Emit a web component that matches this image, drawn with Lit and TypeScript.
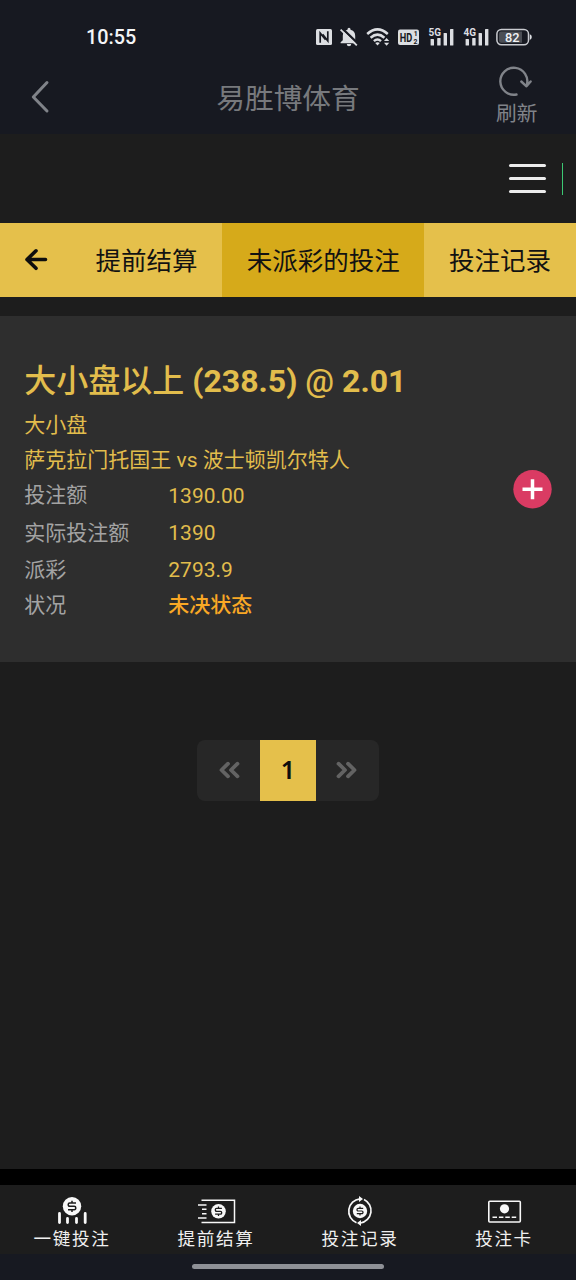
import { LitElement, html, css, svg } from "lit";
import { customElement, property } from "lit/decorators.js";

const dollar = (cx: number, cy: number, k: number) => svg`
  <g transform="translate(${cx} ${cy}) scale(${k})" fill="none" stroke="#1c1c1c" stroke-width="1.5">
    <path d="M4 -3.4H-2.2Q-3.8 -3.4 -3.8 -1.7Q-3.8 0 -2.2 0H2.2Q3.8 0 3.8 1.7Q3.8 3.4 2.2 3.4H-4M0 -5.6V-3.4M0 3.4V5.6" />
  </g>`;

@customElement("status-bar")
class StatusBar extends LitElement {
  static styles = css`
    :host { display: flex; align-items: center; justify-content: space-between; height: 56px; padding: 18px 44px 0 86px; box-sizing: border-box; }
    .time { font: 500 19.8px/38px Roboto, sans-serif; color: #f4f5f7; padding-top: 2px; }
    .icons { display: flex; align-items: center; height: 38px; }
    svg { display: block; fill: #dcdee2; }
    .g8 { margin-left: 8px; }
    .g9 { margin-left: 9px; }
    .g7 { margin-left: 7px; }
    text { font-family: Roboto, sans-serif; font-weight: 700; }
    .level { font-weight: 500; }
  `;
  signal(label: string, cls: string, w: number) {
    return html`<svg class=${cls} width=${w} height="20" viewBox="0 0 ${w} 20">
      <text x="0.5" y="9" font-size="10" textLength="12.5" lengthAdjust="spacingAndGlyphs">${label}</text>
      <rect x="2.6" y="12" width="3.4" height="6.5" rx="0.6" /><rect x="9.2" y="11" width="3.4" height="7.5" rx="0.6" />
      <rect x="15.6" y="6" width="3.4" height="12.5" rx="0.6" /><rect x="22" y="2" width="3.4" height="16.5" rx="0.6" />
    </svg>`;
  }
  render() {
    return html`
      <div class="time">10:55</div>
      <div class="icons">
        <svg width="16" height="20" viewBox="0 0 16 20">
          <rect y="2" width="16" height="16" rx="1.5" />
          <path d="M4.200 15.800V6.200L9.600 12.600M11.800 4.200V13.800L6.600 7.400" fill="none" stroke="#171921" stroke-width="1.700" />
        </svg>
        <svg class="g8" width="18" height="20" viewBox="0 0 18 20">
          <path d="M9 .8a1.500 1.500 0 0 1 1.500 1.500v.5c2.900.7 4.700 2.900 4.700 6v4.400l2.200 2.300v.7H.6v-.9l2.200-2.100V8.800c0-3.100 1.800-5.300 4.700-6v-.5A1.500 1.500 0 0 1 9 .8zM6.800 17h4.400a2.200 2.200 0 0 1-4.400 0z" />
          <path d="M1 .4L18.500 17.200" stroke="#171921" stroke-width="2.400" />
          <path d="M.6 2.600L16.800 18.400" stroke="#dcdee2" stroke-width="1.800" />
        </svg>
        <svg class="g8" width="24" height="20" viewBox="0 0 24 20">
          <g fill="none" stroke="#dcdee2" stroke-width="2.500">
            <path d="M1.200 7Q11.500-2.300 21.800 7M4.600 10.700Q11.500 4.500 18.400 10.700M7.900 14.100Q11.500 11 15 14.100" />
          </g>
          <path d="M9.200 16Q11.500 14.500 13.800 16L11.500 18.600zM18 14l2.600-3 2.600 3zM18 15.700l2.600 3 2.600-3z" />
        </svg>
        <svg class="g8" width="21" height="20" viewBox="0 0 21 20">
          <rect y="2.500" width="21" height="15.500" rx="2" />
          <text x="1.800" y="14.500" font-size="12" textLength="12.500" lengthAdjust="spacingAndGlyphs" fill="#171921">HD</text>
          <text x="15.800" y="9.200" font-size="6.800" fill="#171921">1</text>
          <text x="15.400" y="17.200" font-size="6.800" fill="#171921">2</text>
        </svg>
        ${this.signal("5G", "g9", 27)} ${this.signal("4G", "g8", 26)}
        <svg class="g7" width="36" height="20" viewBox="0 0 36 20">
          <rect x="0.900" y="2.400" width="31.600" height="15.400" rx="4.500" fill="none" stroke="#c9cbd0" stroke-width="1.500" />
          <path d="M3 6.500Q3 4.400 5.200 4.400H26V15.800H5.200Q3 15.800 3 13.700z" fill="#4b4e55" />
          <path d="M33.800 7.300Q35.800 8 35.800 10.100T33.800 12.900z" />
          <text class="level" x="9" y="14.500" font-size="12.800" fill="#f2f3f5">82</text>
        </svg>
      </div>`;
  }
}

@customElement("title-bar")
class TitleBar extends LitElement {
  static styles = css`
    :host { display: grid; grid-template-columns: 120px 1fr 120px; height: 78px; color: #808389; font-family: Roboto, "Noto Sans CJK SC", sans-serif; }
    .back { padding: 24px 0 0 30px; }
    .title { text-align: center; font-size: 28.7px; line-height: 87px; height: 78px; color: #77797d; }
    .refresh { padding: 10px 0 0 40px; }
    .label { font-size: 20.7px; line-height: 24px; margin-top: 3px; }
    svg { display: block; fill: none; stroke: #808389; }
  `;
  render() {
    return html`
      <div class="back"><svg width="20" height="34" viewBox="0 0 20 34" stroke-width="3" stroke-linecap="round" stroke-linejoin="round"><path d="M17 2.500L3.300 17L17 31" /></svg></div>
      <div class="title">易胜博体育</div>
      <div class="refresh">
        <svg width="36" height="33" viewBox="0 0 36 33" stroke-width="2.400" stroke-linecap="round" stroke-linejoin="round">
          <path d="M20.500 28.500A13.500 13.500 0 1 1 30.800 19M25.300 15.500L30.500 20.300L34.600 15.500" />
        </svg>
        <div class="label">刷新</div>
      </div>`;
  }
}

@customElement("menu-row")
class MenuRow extends LitElement {
  static styles = css`
    :host { display: flex; justify-content: flex-end; align-items: center; height: 89px; padding-right: 13px; box-sizing: border-box; gap: 16px; }
    .burger { display: flex; flex-direction: column; gap: 9.700px; width: 37.500px; }
    .line { height: 3.200px; border-radius: 1.500px; background: #ececec; }
    .mark { width: 1px; height: 32px; background: #3cc873; }
  `;
  render() {
    return html`<div class="burger"><div class="line"></div><div class="line"></div><div class="line"></div></div><div class="mark"></div>`;
  }
}

@customElement("tab-strip")
class TabStrip extends LitElement {
  static styles = css`
    :host { display: flex; height: 74px; background: #e5c04b; color: #121212; overflow: hidden; font: 25.500px/77px Roboto, "Noto Sans CJK SC", sans-serif; }
    .back { width: 71px; display: flex; align-items: center; padding-left: 24px; box-sizing: border-box; flex: none; }
    .tab { padding: 0 24.600px; flex: none; white-space: nowrap; }
    .on { background: #d6aa1a; }
  `;
  render() {
    return html`
      <div class="back"><svg width="24" height="24" viewBox="0 0 24 24" fill="none" stroke="#0e0e0e" stroke-width="3.600" stroke-linecap="round" stroke-linejoin="round"><path d="M12 2.800L3 11.500L12 20.300M3.300 11.500H21.500" /></svg></div>
      <div class="tab">提前结算</div><div class="tab on">未派彩的投注</div><div class="tab">投注记录</div>`;
  }
}

@customElement("bet-card")
class BetCard extends LitElement {
  static styles = css`
    :host { display: flex; justify-content: space-between; align-items: center; height: 346px; margin-top: 19px; padding: 0 24px 0 24.300px; box-sizing: border-box; background: #2e2e2e; color: #e2bd4c; font: 21px/35px Roboto, "Noto Sans CJK SC", sans-serif; }
    .info { padding-top: 2px; }
    .title { font-size: 32px; line-height: 46px; font-weight: 500; margin-bottom: 4px; }
    .odds { font-weight: 700; }
    .at { font-weight: 500; }
    .rows { display: grid; grid-template-columns: 144px 1fr; grid-template-rows: 37px 38px 36px 34px; align-items: center; }
    .k { color: #a3a3a3; margin-top: -1px; }
    .state { color: #f9a825; font-weight: 500; }
    svg { display: block; }
  `;
  @property({ attribute: false }) rows = [["投注额", "1390.00"], ["实际投注额", "1390"], ["派彩", "2793.9"]];
  render() {
    return html`
      <div class="info">
        <div class="title">大小盘以上 <span class="odds">(238.5) <span class="at">@</span> 2.01</span></div>
        <div>大小盘</div>
        <div>萨克拉门托国王 vs 波士顿凯尔特人</div>
        <div class="rows">
          ${this.rows.map(([k, v]) => html`<div class="k">${k}</div><div>${v}</div>`)}
          <div class="k">状况</div><div class="state">未决状态</div>
        </div>
      </div>
      <svg width="39" height="39" viewBox="0 0 39 39"><circle cx="19.500" cy="19.200" r="19.200" fill="#da3b63" /><path d="M9.500 19.200H29.500M19.500 9.200V29.200" stroke="#fff" stroke-width="3.500" /></svg>`;
  }
}

@customElement("page-switch")
class PageSwitch extends LitElement {
  static styles = css`
    :host { display: flex; justify-content: center; margin-top: 78px; }
    .box { display: grid; grid-template-columns: 63px 56px 63px; height: 61px; border-radius: 8px; background: #272727; overflow: hidden; }
    .cell { display: flex; align-items: center; justify-content: center; }
    .cur { background: #e5c04b; color: #0e0e0e; font: 600 25px/59px "Noto Sans", Roboto, sans-serif; align-items: flex-start; }
    svg { fill: none; stroke: #636363; stroke-width: 3.800; stroke-linecap: round; stroke-linejoin: round; }
  `;
  render() {
    return html`<div class="box">
      <div class="cell"><svg width="24" height="20" viewBox="0 0 24 20"><path d="M11 2.700L4.500 9L11 15.300M20.500 2.700L14 9L20.500 15.300" /></svg></div>
      <div class="cell cur">1</div>
      <div class="cell"><svg width="24" height="20" viewBox="0 0 24 20"><path d="M2.500 2.700L9 9L2.500 15.300M12 2.700L18.500 9L12 15.300" /></svg></div>
    </div>`;
  }
}

@customElement("bottom-nav")
class BottomNav extends LitElement {
  static styles = css`
    :host { display: block; margin-top: auto; }
    .gap { height: 16px; background: #000; }
    .nav { display: grid; grid-template-columns: repeat(4, 1fr); height: 69px; }
    .item { display: flex; flex-direction: column; align-items: center; padding-top: 10px; color: #f0f0f0; font: 17.600px/25px Roboto, "Noto Sans CJK SC", sans-serif; letter-spacing: 1.600px; }
    .home { display: flex; justify-content: center; height: 26px; padding-top: 10px; box-sizing: border-box; background: #171921; }
    .bar { width: 192px; height: 5px; border-radius: 3px; background: #8e9096; }
    svg { display: block; }
  `;
  render() {
    const w = "#f8f8f8";
    return html`
      <div class="gap"></div>
      <div class="nav">
        <div class="item"><svg width="40" height="32" viewBox="0 0 40 32">
          <circle cx="20" cy="11.300" r="9.200" fill=${w} />${dollar(20, 11.300, 1)}
          <path d="M7.500 18.500V27.500M15.500 23.500V27.500M24.500 23.500V27.500M33.200 18.500V27.500" stroke=${w} stroke-width="2.800" stroke-linecap="round" />
        </svg><span>一键投注</span></div>
        <div class="item"><svg width="40" height="32" viewBox="0 0 40 32">
          <path d="M5.500 5.200H38.500V27.500H5.500M2 10H10.500M6 14.300H10.500M6 18.800H10.500M2 23H10.500" fill="none" stroke=${w} stroke-width="1.500" />
          <circle cx="22.500" cy="16.300" r="7.300" fill=${w} />${dollar(22.500, 16.300, 0.850)}
        </svg><span>提前结算</span></div>
        <div class="item"><svg width="40" height="32" viewBox="0 0 40 32">
          <path d="M16.500 27.800A12.500 12.500 0 0 1 20 3.800M24 4.400A12.500 12.500 0 0 1 20.500 28" fill="none" stroke=${w} stroke-width="1.700" />
          <path d="M19 1L23 4L19 7zM21 25L17 28L21 31z" fill=${w} />
          <circle cx="20" cy="16" r="7.200" fill=${w} />${dollar(20, 16, 0.800)}
        </svg><span>投注记录</span></div>
        <div class="item"><svg width="40" height="32" viewBox="0 0 40 32">
          <rect x="4.800" y="6.200" width="31.500" height="20.800" rx="1" fill="none" stroke=${w} stroke-width="1.600" />
          <circle cx="20.500" cy="13.800" r="4.600" fill=${w} />
          <path d="M8.500 22.300H33" stroke=${w} stroke-width="1.500" stroke-dasharray="4.500 1.900" />
        </svg><span>投注卡</span></div>
      </div>
      <div class="home"><div class="bar"></div></div>`;
  }
}

@customElement("app-root")
class AppRoot extends LitElement {
  static styles = css`
    :host { display: flex; flex-direction: column; width: 576px; height: 1280px; background: #1d1d1d; overflow: hidden; }
    .top { background: #171921; flex: none; }
  `;
  render() {
    return html`
      <div class="top"><status-bar></status-bar><title-bar></title-bar></div>
      <menu-row></menu-row>
      <tab-strip></tab-strip>
      <bet-card></bet-card>
      <page-switch></page-switch>
      <bottom-nav></bottom-nav>`;
  }
}
